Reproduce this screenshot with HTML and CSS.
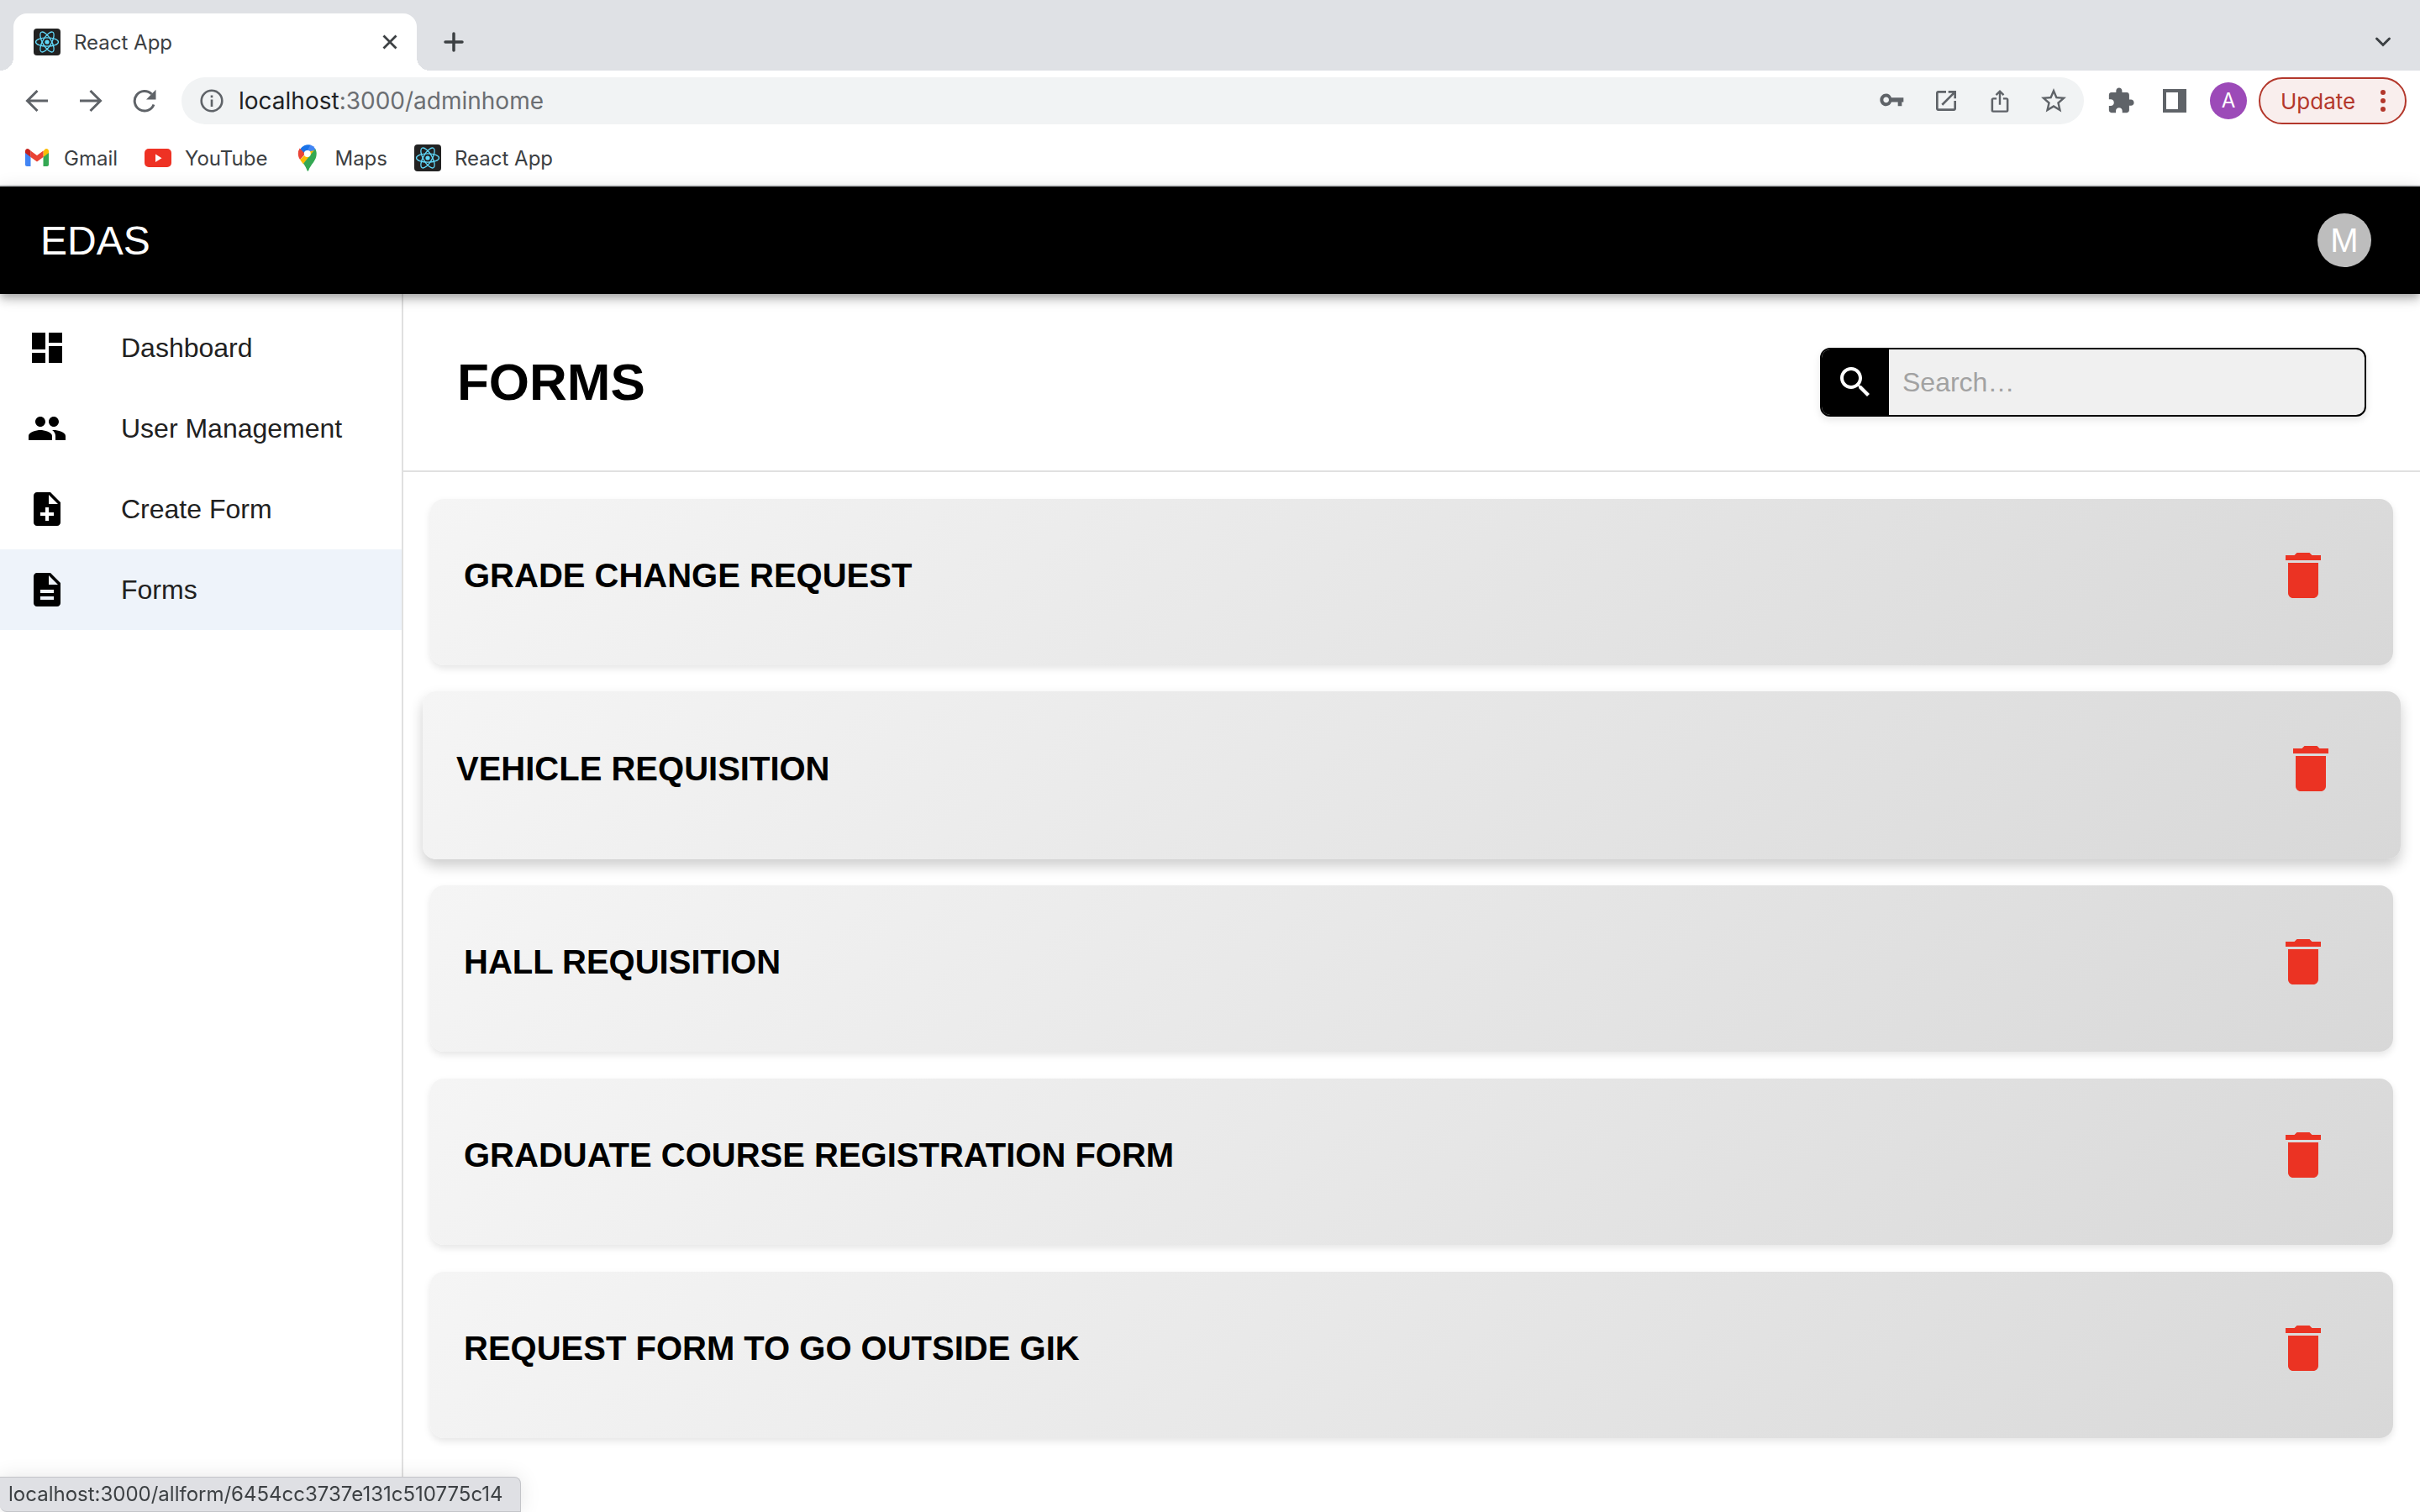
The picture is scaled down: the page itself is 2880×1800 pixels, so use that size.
FILE: index.html
```html
<!DOCTYPE html>
<html lang="en">
<head>
<meta charset="utf-8">
<title>React App</title>
<link rel="stylesheet" href="styles.css">
</head>
<body>
<svg class="defs" aria-hidden="true">
  <symbol id="react" viewBox="0 0 32 32">
    <rect width="32" height="32" rx="4" fill="#222"/>
    <g fill="none" stroke="#61dafb" stroke-width="1.3">
      <ellipse cx="16" cy="16" rx="13.5" ry="5.2"/>
      <ellipse cx="16" cy="16" rx="13.5" ry="5.2" transform="rotate(60 16 16)"/>
      <ellipse cx="16" cy="16" rx="13.5" ry="5.2" transform="rotate(120 16 16)"/>
    </g>
    <circle cx="16" cy="16" r="2.6" fill="#61dafb"/>
  </symbol>
  <symbol id="trash" viewBox="0 0 24 24">
    <path d="M6 19c0 1.100.9 2 2 2h8c1.100 0 2-.9 2-2V7H6v12zM19 4h-3.500l-1-1h-5l-1 1H5v2h14V4z"/>
  </symbol>
</svg>

<div class="browser">
  <div class="tab-strip">
    <div class="tab">
      <svg class="icon-32"><use href="#react"/></svg>
      <span class="tab-title">React App</span>
      <button class="slot tab-close" aria-label="Close tab">
        <svg width="18" height="18" viewBox="0 0 18 18" fill="none" stroke="#3c4043" stroke-width="2.800"><path d="M1.500 1.500l15 15M16.500 1.500l-15 15"/></svg>
      </button>
    </div>
    <button class="slot new-tab" aria-label="New tab">
      <svg width="24" height="24" viewBox="0 0 24 24" fill="none" stroke="#3c4043" stroke-width="3.500" stroke-linecap="round"><path d="M12 2v20M2 12h20"/></svg>
    </button>
    <button class="slot tab-menu" aria-label="Search tabs">
      <svg width="20" height="14" viewBox="0 0 20 14" fill="none" stroke="#3c4043" stroke-width="3" stroke-linecap="round"><path d="M2.500 3L10 10.500 17.500 3"/></svg>
    </button>
  </div>

  <div class="toolbar">
    <button class="slot" aria-label="Back">
      <svg width="28" height="28" viewBox="0 0 28 28" fill="none" stroke="#5f6368" stroke-width="3"><path d="M27 14H3M14.500 2L2.500 14l12 12"/></svg>
    </button>
    <button class="slot" aria-label="Forward">
      <svg width="28" height="28" viewBox="0 0 28 28" fill="none" stroke="#5f6368" stroke-width="3"><path d="M1 14h24M13.500 2l12 12-12 12"/></svg>
    </button>
    <button class="slot" aria-label="Reload">
      <svg width="28" height="28" viewBox="0 0 28 28"><path d="M25 18.500A11.800 11.800 0 1 1 22.500 6" fill="none" stroke="#5f6368" stroke-width="3"/><path d="M27.500.8v11.700H16z" fill="#5f6368"/></svg>
    </button>
    <div class="address">
      <svg class="info" width="28" height="28" viewBox="0 0 28 28"><circle cx="14" cy="14" r="12.300" fill="none" stroke="#5f6368" stroke-width="2.600"/><path d="M12.700 12.500h2.600V21h-2.600zM12.700 7.500h2.600v2.800h-2.600z" fill="#5f6368"/></svg>
      <span class="url"><span class="host">localhost</span>:3000/adminhome</span>
      <button class="slot" aria-label="Passwords">
        <svg width="32" height="32" viewBox="0 0 24 24" fill="#5f6368"><path d="M12.200 10C11.500 7.900 9.700 6.500 7.500 6.500 4.500 6.500 2 9 2 12s2.500 5.500 5.500 5.500c2.200 0 4-1.400 4.700-3.500H18v3.500h3.500V14H23v-4H12.200zM7.500 14.500C6.100 14.500 5 13.400 5 12s1.100-2.500 2.500-2.500S10 10.600 10 12s-1.100 2.500-2.500 2.500z" transform="translate(-1 -.8)"/></svg>
      </button>
      <button class="slot" aria-label="Open in new window">
        <svg width="32" height="32" viewBox="0 0 24 24" fill="#5f6368"><path d="M19 19H5V5h7V3H5c-1.110 0-2 .9-2 2v14c0 1.100.89 2 2 2h14c1.100 0 2-.9 2-2v-7h-2v7zM14 3v2h3.590l-9.830 9.830 1.410 1.410L19 6.410V10h2V3h-7z"/></svg>
      </button>
      <button class="slot" aria-label="Share">
        <svg width="32" height="32" viewBox="0 0 24 24" fill="#5f6368"><path d="M16 6.200l-1.300 1.300-1.800-1.800v9.800h-1.800V5.700L9.300 7.500 8 6.200l4-4zM19.800 11v9.500a1.900 1.900 0 0 1-1.900 1.900H6.100a1.900 1.900 0 0 1-1.900-1.900V11c0-1.100.9-1.900 1.900-1.900h3v1.800h-3v9.700h11.800v-9.700h-3V9.100h3c1 0 1.900.8 1.900 1.900z"/></svg>
      </button>
      <button class="slot" aria-label="Bookmark this tab">
        <svg width="36" height="36" viewBox="0 0 24 24" fill="#5f6368"><path d="M22 9.240l-7.190-.62L12 2 9.190 8.630 2 9.240l5.460 4.730L5.820 21 12 17.270 18.180 21l-1.630-7.030L22 9.240zM12 15.400l-3.760 2.270 1-4.280-3.320-2.880 4.380-.38L12 6.100l1.710 4.040 4.380.38-3.320 2.880 1 4.280L12 15.400z"/></svg>
      </button>
    </div>
    <button class="slot" aria-label="Extensions">
      <svg width="34" height="34" viewBox="0 0 24 24" fill="#5f6368"><path d="M20.500 11H19V7c0-1.100-.9-2-2-2h-4V3.500C13 2.120 11.880 1 10.500 1S8 2.120 8 3.500V5H4c-1.100 0-1.990.9-1.990 2v3.800H3.500c1.490 0 2.700 1.210 2.700 2.700s-1.210 2.700-2.700 2.700H2V20c0 1.100.9 2 2 2h3.800v-1.500c0-1.490 1.210-2.700 2.700-2.700 1.490 0 2.700 1.210 2.700 2.700V22H17c1.100 0 2-.9 2-2v-4h1.500c1.380 0 2.500-1.120 2.500-2.500S21.880 11 20.500 11z"/></svg>
    </button>
    <button class="slot" aria-label="Side panel">
      <svg width="28" height="28" viewBox="0 0 28 28"><path fill-rule="evenodd" d="M0 0h28v28H0zM4 4v20h14V4z" fill="#5f6368"/></svg>
    </button>
    <button class="slot" aria-label="Profile"><span class="profile">A</span></button>
    <button class="update">Update
      <svg width="8" height="28" viewBox="0 0 8 28" fill="#b3372b"><circle cx="4" cy="4" r="3"/><circle cx="4" cy="14" r="3"/><circle cx="4" cy="24" r="3"/></svg>
    </button>
  </div>

  <nav class="bookmarks" aria-label="Bookmarks">
    <a href="#gmail">
      <svg class="icon-32" viewBox="0 0 32 32"><path d="M2 8v16c0 1.200.8 2 2 2h4.500V14z" fill="#4285f4"/><path d="M30 8v16c0 1.200-.8 2-2 2h-4.500V14z" fill="#34a853"/><path d="M23.500 8.200V15L30 10V8c0-2.500-2.700-3.800-4.600-2.300z" fill="#fbbc04"/><path d="M8.500 15V7.500L16 13l7.500-5.500V15L16 20.600z" fill="#ea4335"/><path d="M2 8v2l6.500 5V7.500L6.600 5.700C4.700 4.200 2 5.500 2 8z" fill="#c5221f"/></svg>
      Gmail</a>
    <a href="#youtube">
      <svg class="icon-32" viewBox="0 0 32 32"><rect y="5" width="32" height="22" rx="5" fill="#ee3224"/><path d="M13 11.500v9.500l7.500-4.800z" fill="#fff"/></svg>
      YouTube</a>
    <a href="#maps">
      <svg class="icon-32" viewBox="0 0 32 32"><path d="M6.700 6.200L13 11.500l6-7.300L19.500.6A11.500 11.500 0 0 0 6.700 6.200z" fill="#1a73e8"/><path d="M6.700 4.500A11 11 0 0 0 4.800 11c0 2.800.8 5 2.300 7l6-6.800z" fill="#ea4335"/><path d="M19.500.6l-6 10.500 5.500 1.500 6.500-7.200A11 11 0 0 0 19.500.6z" fill="#4285f4"/><path d="M7.100 18c1 1.900 2.500 3.700 4 5.500L24.800 7l-8 1.500z" fill="#fbbc04"/><path d="M25.200 5.200L11.100 22.800c2 2.500 3.300 5.200 4.400 8.200.3.900 1.400.9 1.700 0 2.500-7.500 9.500-11.500 9.500-20 0-2.300-.5-4.200-1.500-5.800z" fill="#34a853"/><circle cx="15.800" cy="11" r="4" fill="#fff"/></svg>
      Maps</a>
    <a href="#react-app">
      <svg class="icon-32"><use href="#react"/></svg>
      React App</a>
  </nav>
</div>

<header class="app-bar">
  <span class="brand">EDAS</span>
  <button class="avatar" aria-label="Account">M</button>
</header>

<div class="app">
  <nav class="sidebar" aria-label="Main">
    <a href="#dashboard">
      <svg class="icon-48" viewBox="0 0 24 24"><path d="M3 13h8V3H3v10zm0 8h8v-6H3v6zm10 0h8V11h-8v10zm0-18v6h8V3h-8z"/></svg>
      Dashboard</a>
    <a href="#users">
      <svg class="icon-48" viewBox="0 0 24 24"><path d="M16 11c1.660 0 2.990-1.340 2.990-3S17.660 5 16 5c-1.660 0-3 1.340-3 3s1.340 3 3 3zm-8 0c1.660 0 2.990-1.340 2.990-3S9.660 5 8 5C6.340 5 5 6.340 5 8s1.340 3 3 3zm0 2c-2.330 0-7 1.170-7 3.500V19h14v-2.500c0-2.330-4.670-3.500-7-3.500zm8 0c-.29 0-.62.020-.97.050 1.160.84 1.970 1.970 1.970 3.450V19h6v-2.500c0-2.330-4.670-3.500-7-3.500z"/></svg>
      User Management</a>
    <a href="#create">
      <svg class="icon-48" viewBox="0 0 24 24"><path d="M14 2H6c-1.100 0-1.990.9-1.990 2L4 20c0 1.100.89 2 1.990 2H18c1.100 0 2-.9 2-2V8l-6-6zm2 14h-3v3h-2v-3H8v-2h3v-3h2v3h3v2zm-3-7V3.500L18.500 9H13z"/></svg>
      Create Form</a>
    <a href="#forms" class="current" aria-current="page">
      <svg class="icon-48" viewBox="0 0 24 24"><path d="M14 2H6c-1.100 0-1.990.9-1.990 2L4 20c0 1.100.89 2 1.990 2H18c1.100 0 2-.9 2-2V8l-6-6zm2 16H8v-2h8v2zm0-4H8v-2h8v2zm-3-5V3.500L18.500 9H13z"/></svg>
      Forms</a>
  </nav>

  <main class="content">
    <div class="page-head">
      <h1>FORMS</h1>
      <form class="search">
        <button type="button" aria-label="Search">
          <svg class="icon-48" viewBox="0 0 24 24"><path d="M15.500 14h-.79l-.28-.27C15.410 12.590 16 11.110 16 9.500 16 5.910 13.090 3 9.500 3S3 5.910 3 9.500 5.910 16 9.500 16c1.610 0 3.090-.59 4.230-1.570l.27.28v.79l5 4.990L20.490 19l-4.990-5zm-6 0C7.010 14 5 11.990 5 9.500S7.010 5 9.500 5 14 7.010 14 9.500 11.990 14 9.500 14z"/></svg>
        </button>
        <input type="text" placeholder="Search…" aria-label="Search forms">
      </form>
    </div>
    <ul class="cards">
      <li class="card"><a href="#form-1">GRADE CHANGE REQUEST</a><button aria-label="Delete Grade Change Request"><svg class="icon-72"><use href="#trash"/></svg></button></li>
      <li class="card raised"><a href="#form-2">VEHICLE REQUISITION</a><button aria-label="Delete Vehicle Requisition"><svg class="icon-72"><use href="#trash"/></svg></button></li>
      <li class="card"><a href="#form-3">HALL REQUISITION</a><button aria-label="Delete Hall Requisition"><svg class="icon-72"><use href="#trash"/></svg></button></li>
      <li class="card"><a href="#form-4">GRADUATE COURSE REGISTRATION FORM</a><button aria-label="Delete Graduate Course Registration Form"><svg class="icon-72"><use href="#trash"/></svg></button></li>
      <li class="card"><a href="#form-5">REQUEST FORM TO GO OUTSIDE GIK</a><button aria-label="Delete Request Form To Go Outside GIK"><svg class="icon-72"><use href="#trash"/></svg></button></li>
    </ul>
  </main>
</div>

<div class="status">localhost:3000/allform/6454cc3737e131c510775c14</div>
</body>
</html>
```
FILE: styles.css
```css
* {
  box-sizing: border-box;
}

body {
  display: flex;
  flex-direction: column;
  min-height: 100vh;
  margin: 0;
  background: #fff;
  color: #000;
  font-family: "Liberation Sans", Arial, sans-serif;
}

a {
  color: inherit;
  text-decoration: none;
}

button {
  padding: 0;
  border: 0;
  background: none;
  color: inherit;
  font: inherit;
}

svg {
  display: block;
  flex: none;
}

.defs {
  position: absolute;
  width: 0;
  height: 0;
}

.icon-32 {
  width: 32px;
  height: 32px;
}

.icon-48 {
  width: 48px;
  height: 48px;
  fill: currentColor;
}

.icon-72 {
  width: 72px;
  height: 72px;
  fill: #eb3323;
}

/* Browser frame */

.browser {
  border-bottom: 2px solid #d9dbdd;
  color: #3c4043;
  font-family: Inter, sans-serif;
  font-size: 24px;
}

.slot {
  display: flex;
  flex: none;
  align-items: center;
  justify-content: center;
  width: 64px;
  height: 56px;
}

.tab-strip {
  display: flex;
  align-items: center;
  height: 84px;
  padding: 16px 12px 0 16px;
  background: #dfe1e5;
}

.tab {
  position: relative;
  display: flex;
  align-items: center;
  gap: 16px;
  width: 480px;
  height: 68px;
  padding-left: 24px;
  border-radius: 16px 16px 0 0;
  background: #fff;
}

.tab::before,
.tab::after {
  position: absolute;
  bottom: 0;
  width: 16px;
  height: 16px;
  content: "";
}

.tab::before {
  right: 100%;
  background: radial-gradient(circle at 0 0, transparent 16px, #fff 16px);
}

.tab::after {
  left: 100%;
  background: radial-gradient(circle at 100% 0, transparent 16px, #fff 16px);
}

.tab-close,
.tab-menu {
  margin-left: auto;
}

.new-tab {
  margin-left: 12px;
}

.toolbar {
  display: flex;
  align-items: center;
  padding: 8px 16px 8px 12px;
}

.address {
  display: flex;
  flex: 1;
  align-items: center;
  height: 56px;
  margin: 0 12px;
  padding: 0 4px 0 22px;
  border-radius: 28px;
  background: #f1f3f4;
}

.url {
  flex: 1;
  margin-left: 18px;
  color: #6b6e72;
  font-size: 28px;
}

.host {
  color: #202124;
}

.profile {
  width: 44px;
  border-radius: 50%;
  background: #9c4ab8;
  color: #fff;
  line-height: 44px;
}

.update {
  display: flex;
  align-items: center;
  justify-content: space-between;
  width: 176px;
  height: 56px;
  margin-left: 4px;
  padding: 0 22px 0 24px;
  border: 2px solid #b3372b;
  border-radius: 28px;
  background: #f9eeed;
  color: #b3372b;
  font-size: 26px;
}

.bookmarks {
  display: flex;
  gap: 32px;
  height: 64px;
  padding: 0 28px;
}

.bookmarks a {
  display: flex;
  align-items: center;
  gap: 16px;
}

/* Application */

.app-bar {
  position: relative;
  display: flex;
  align-items: center;
  justify-content: space-between;
  height: 128px;
  padding: 0 58px 0 48px;
  background: #000;
  box-shadow: 0 4px 8px -2px rgba(0, 0, 0, 0.2), 0 8px 10px rgba(0, 0, 0, 0.14), 0 2px 20px rgba(0, 0, 0, 0.12);
  color: #fff;
}

.brand {
  font-size: 48px;
}

.avatar {
  width: 64px;
  height: 64px;
  border-radius: 50%;
  background: #bdbdbd;
  color: #fff;
  font-size: 40px;
}

.app {
  display: flex;
  flex: 1;
}

.sidebar {
  flex: none;
  width: 480px;
  padding-top: 16px;
  border-right: 2px solid #e0e0e0;
}

.sidebar a {
  display: flex;
  align-items: center;
  gap: 64px;
  height: 96px;
  padding-left: 32px;
  color: #212121;
  font-size: 32px;
}

.sidebar svg {
  color: #000;
}

.sidebar .current {
  background: #eef3fa;
}

.content {
  flex: 1;
}

.page-head {
  display: flex;
  align-items: center;
  justify-content: space-between;
  padding: 64px;
  border-bottom: 2px solid #e0e0e0;
}

h1 {
  margin: 0;
  font-size: 62px;
  line-height: 72px;
}

.search {
  display: flex;
  width: 650px;
  height: 82px;
  overflow: hidden;
  border: 2px solid #000;
  border-radius: 12px;
  background: #f0f0f0;
  box-shadow: 0 4px 10px rgba(0, 0, 0, 0.1);
}

.search button {
  display: flex;
  align-items: center;
  justify-content: center;
  width: 80px;
  background: #000;
  color: #fff;
}

.search input {
  flex: 1;
  min-width: 0;
  padding: 0 16px;
  border: 0;
  background: none;
  font: 32px "Liberation Sans", Arial, sans-serif;
}

.search input::placeholder {
  color: #a2a2a2;
}

.cards {
  display: flex;
  flex-direction: column;
  gap: 32px;
  margin: 0;
  padding: 32px;
  list-style: none;
}

.card {
  display: flex;
  align-items: center;
  justify-content: space-between;
  padding: 40px 56px 56px 40px;
  border-radius: 16px;
  background: linear-gradient(135deg, #f5f5f5, #d8d8d8);
  box-shadow: 0 4px 8px rgba(0, 0, 0, 0.1);
  font-size: 40px;
  font-weight: bold;
}

.card button {
  padding: 15px;
}

/* The card under the pointer grows a little */
.card.raised {
  margin: -1px -9px;
  padding-top: 41px;
  padding-bottom: 57px;
  box-shadow: 0 8px 16px rgba(0, 0, 0, 0.2);
}

.status {
  position: fixed;
  bottom: 0;
  left: 0;
  height: 42px;
  padding: 0 20px 0 10px;
  border: 1px solid #c3c4c8;
  border-left: 0;
  border-radius: 0 8px 0 8px;
  background: #dfe0e4;
  box-shadow: 0 0 24px rgba(0, 0, 0, 0.1);
  color: #3c4043;
  font-family: Inter, sans-serif;
  font-size: 24px;
  line-height: 40px;
}
```
